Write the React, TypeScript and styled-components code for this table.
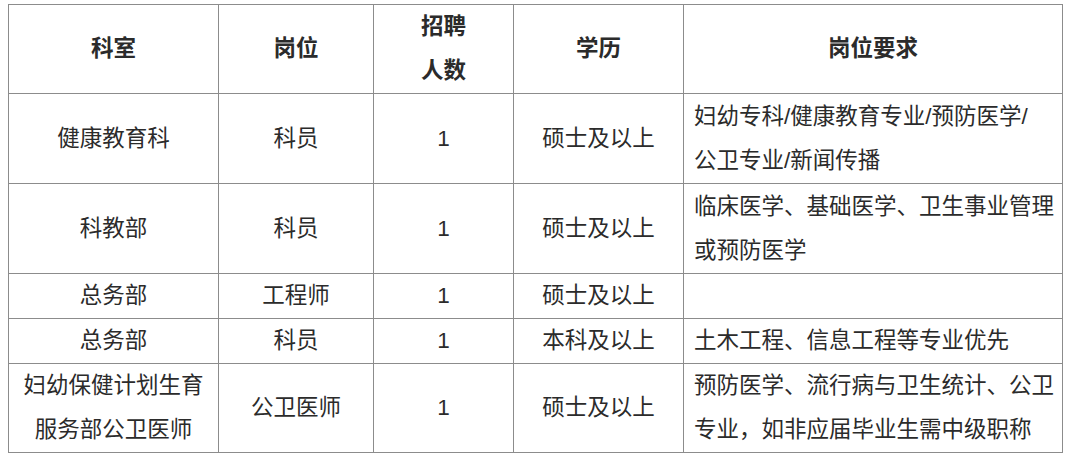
import styled, { createGlobalStyle } from "styled-components";

const GlobalStyle = createGlobalStyle`
  body {
    margin: 0;
    background: #fff;
  }
`;

const Page = styled.div`
  padding: 4px 0 0 8px;
`;

const Table = styled.table`
  border-collapse: collapse;
  table-layout: fixed;
  width: 1054px;
  font-family: "Liberation Sans", "Noto Sans CJK SC", sans-serif;
  font-size: 22.5px;
  color: #2b2b2b;
`;

const Row = styled.tr<{ $h: number }>`
  height: ${p => p.$h}px;
`;

const Head = styled.th`
  border: 1px solid #8c8c8c;
  padding: 0;
  line-height: 44px;
  font-weight: 600;
  text-align: center;
  vertical-align: middle;
`;

const Cell = styled.td<{ $left?: boolean }>`
  border: 1px solid #8c8c8c;
  padding: ${p => (p.$left ? "0 0 0 10px" : "0")};
  line-height: 44px;
  text-align: ${p => (p.$left ? "left" : "center")};
  vertical-align: middle;
  white-space: nowrap;
`;

interface Job {
  dept: React.ReactNode;
  post: string;
  count: number;
  edu: string;
  req: React.ReactNode;
  h: number;
}

const jobs: Job[] = [
  {
    dept: "健康教育科",
    post: "科员",
    count: 1,
    edu: "硕士及以上",
    req: (
      <>
        妇幼专科/健康教育专业/预防医学/
        <br />
        公卫专业/新闻传播
      </>
    ),
    h: 90,
  },
  {
    dept: "科教部",
    post: "科员",
    count: 1,
    edu: "硕士及以上",
    req: (
      <>
        临床医学、基础医学、卫生事业管理
        <br />
        或预防医学
      </>
    ),
    h: 90,
  },
  { dept: "总务部", post: "工程师", count: 1, edu: "硕士及以上", req: "", h: 45 },
  {
    dept: "总务部",
    post: "科员",
    count: 1,
    edu: "本科及以上",
    req: "土木工程、信息工程等专业优先",
    h: 45,
  },
  {
    dept: (
      <>
        妇幼保健计划生育
        <br />
        服务部公卫医师
      </>
    ),
    post: "公卫医师",
    count: 1,
    edu: "硕士及以上",
    req: (
      <>
        预防医学、流行病与卫生统计、公卫
        <br />
        专业，如非应届毕业生需中级职称
      </>
    ),
    h: 89,
  },
];

export default function App() {
  return (
    <Page>
      <GlobalStyle />
      <Table>
        <colgroup>
          <col style={{ width: 210 }} />
          <col style={{ width: 155 }} />
          <col style={{ width: 140 }} />
          <col style={{ width: 170 }} />
          <col style={{ width: 379 }} />
        </colgroup>
        <thead>
          <Row $h={89}>
            <Head>科室</Head>
            <Head>岗位</Head>
            <Head>
              招聘
              <br />
              人数
            </Head>
            <Head>学历</Head>
            <Head>岗位要求</Head>
          </Row>
        </thead>
        <tbody>
          {jobs.map((job, i) => (
            <Row key={i} $h={job.h}>
              <Cell>{job.dept}</Cell>
              <Cell>{job.post}</Cell>
              <Cell>{job.count}</Cell>
              <Cell>{job.edu}</Cell>
              <Cell $left>{job.req}</Cell>
            </Row>
          ))}
        </tbody>
      </Table>
    </Page>
  );
}
